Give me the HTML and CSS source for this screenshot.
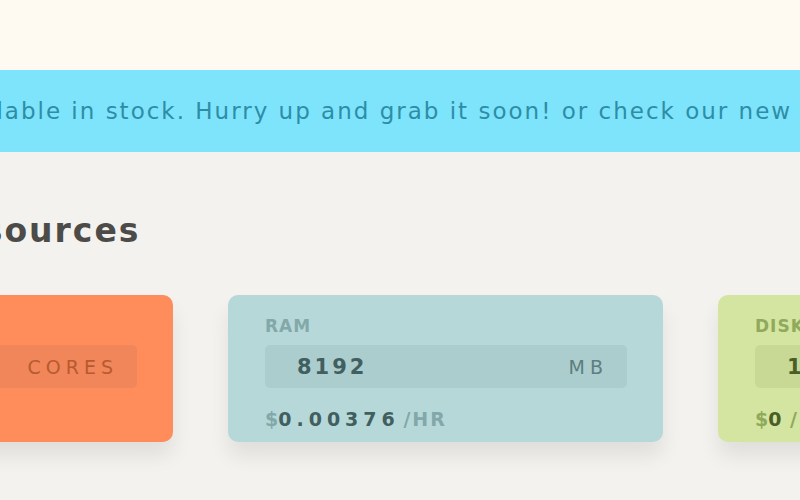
FILE: index.html
```html
<!DOCTYPE html>
<html lang="en">
<head>
    <meta charset="UTF-8"/>
    <title>Configure Server</title>
    <link rel="stylesheet" href="styles.css">
</head>
<body>

<div class="topbar"></div>

<div class="notice">
    <p>Sorry, this configuration is not available in stock. Hurry up and grab it soon! or check our new plans.</p>
</div>

<div class="main">
    <h2>Resources</h2>

    <div class="cards">
        <div class="card cpu">
            <label>CPU</label>
            <div class="field">
                <span class="value">4</span>
                <span class="unit">CORES</span>
            </div>
            <div class="price"><span class="cur">$</span><span class="amount">0.01200</span> <span class="per">/HR</span></div>
        </div>

        <div class="card ram">
            <label>RAM</label>
            <div class="field">
                <span class="value">8192</span>
                <span class="unit">MB</span>
            </div>
            <div class="price"><span class="cur">$</span><span class="amount">0.00376</span> <span class="per">/HR</span></div>
        </div>

        <div class="card disk">
            <label>DISK</label>
            <div class="field">
                <span class="value">100</span>
                <span class="unit">GB</span>
            </div>
            <div class="price"><span class="cur">$</span><span class="amount">0</span> <span class="per">/HR</span></div>
        </div>
    </div>
</div>

</body>
</html>
```

FILE: styles.css
```css
body {
  margin: 0;
  font-family: 'DejaVu Sans', sans-serif;
  background: #f3f2ee;
  width: 800px;
  height: 500px;
  overflow: hidden;
}

.topbar {
  height: 70px;
  background: #fefaf2;
}

.notice {
  height: 82px;
  background: #7de4fc;
  display: flex;
  align-items: center;
  overflow: hidden;
}

.notice p {
  margin: 0 0 0 -481px;
  white-space: nowrap;
  font-size: 23px;
  letter-spacing: 2px;
  color: #2e8da6;
}

.main {
  margin-left: -262px;
  padding-top: 59px;
}

h2 {
  margin: 0 0 44px 193px;
  font-size: 33px;
  line-height: 40px;
  font-weight: 700;
  letter-spacing: 2px;
  color: #4c4b48;
}

.cards {
  display: flex;
  gap: 55px;
}

.card {
  flex: 0 0 435px;
  box-sizing: border-box;
  height: 147px;
  padding: 22px 36px 0 37px;
  border-radius: 10px;
  box-shadow: 0 14px 20px rgba(0, 0, 0, 0.08);
}

.card label {
  display: block;
  font-size: 17px;
  line-height: 18px;
  font-weight: 700;
  letter-spacing: 1px;
}

.field {
  display: flex;
  justify-content: space-between;
  align-items: center;
  height: 43px;
  margin-top: 10px;
  padding: 0 22px 0 32px;
  border-radius: 5px;
}

.field .value {
  font-size: 21px;
  font-weight: 700;
  letter-spacing: 3px;
}

.field .unit {
  font-size: 19px;
  letter-spacing: 5px;
  margin-right: -3px;
}

.price {
  margin-top: 20px;
  font-size: 19px;
  line-height: 22px;
  font-weight: 700;
}

.price .amount {
  letter-spacing: 5px;
  margin-right: -3px;
}

.price .per {
  letter-spacing: 2px;
}

/* card colours */
.cpu { background: #fe8d5b; }
.cpu label, .cpu .cur, .cpu .per { color: #c8693f; }
.cpu .field { background: #f0865a; }
.cpu .value, .cpu .price { color: #9c4823; }
.cpu .unit { color: #b85a30; }

.ram { background: #b7d8d8; }
.ram label, .ram .cur, .ram .per { color: #83a8a9; }
.ram .field { background: #abcdcd; }
.ram .value, .ram .price { color: #415e60; }
.ram .unit { color: #5d7e80; }

.disk { background: #d4e5a1; }
.disk label, .disk .cur, .disk .per { color: #8faa5a; }
.disk .field { background: #c7d995; }
.disk .value, .disk .price { color: #4a5f26; }
.disk .unit { color: #6b8240; }
```
